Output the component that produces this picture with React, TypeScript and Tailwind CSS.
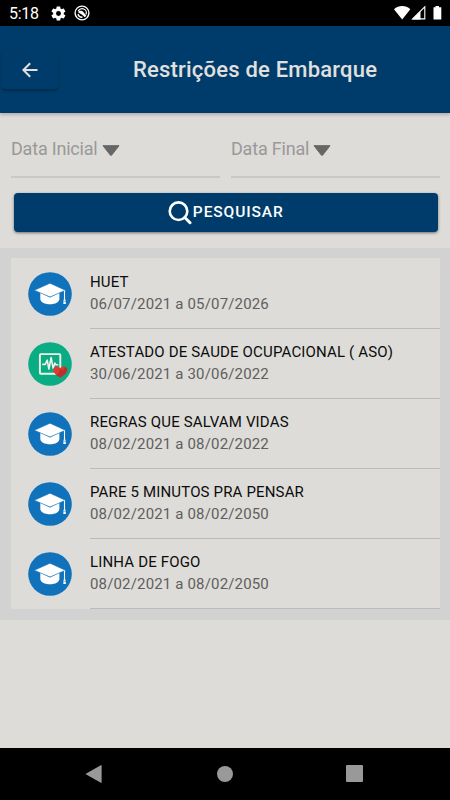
import React from "react";

interface Restriction {
    title: string;
    start: string;
    end: string;
    type: "course" | "health";
}

const restrictions: Restriction[] = [
    { title: "HUET", start: "06/07/2021", end: "05/07/2026", type: "course" },
    { title: "ATESTADO DE SAUDE OCUPACIONAL ( ASO)", start: "30/06/2021", end: "30/06/2022", type: "health" },
    { title: "REGRAS QUE SALVAM VIDAS", start: "08/02/2021", end: "08/02/2022", type: "course" },
    { title: "PARE 5 MINUTOS PRA PENSAR", start: "08/02/2021", end: "08/02/2050", type: "course" },
    { title: "LINHA DE FOGO", start: "08/02/2021", end: "08/02/2050", type: "course" },
];

const CourseIcon: React.FC = () => (
    <svg viewBox="0 0 44 44" className="size-11 shrink-0">
        <circle cx="22" cy="22" r="21.8" fill="#1072bb" />
        <path d="M12.3 20.5v6.2c0 3.3 4.3 5.5 9.7 5.5s9.4-2.2 9.4-5.5v-6.2L22 25.6z" fill="#fff" />
        <path d="M6.3 18.3 22 11.2l15.4 7.1L22 25z" fill="#fff" stroke="#1072bb" strokeWidth="0.6" />
        <path d="M36.5 18.3v9.5" stroke="#fff" strokeWidth="1.1" />
        <path d="M35.6 27.5h1.9l.4 4.6h-2.6z" fill="#fff" />
        <path d="M35.5 29.3h2.2" stroke="#1072bb" strokeWidth="0.5" />
    </svg>
);

const HealthIcon: React.FC = () => (
    <svg viewBox="0 0 44 44" className="size-11 shrink-0" fill="none">
        <circle cx="22" cy="22" r="21.8" fill="#0aac83" />
        <rect x="11.9" y="12.1" width="20.4" height="19.6" rx="0.8" stroke="#eef2e9" strokeWidth="1.9" />
        <path d="M14.2 22.4h3l2-4.2 1.7 8.8 2.2-11.5 2 10.7 1.8-5.2.9 1.7h2.5" stroke="#eef2e9" strokeWidth="1.6" strokeLinejoin="round" />
        <path d="M32.2 35.4c-3.7-2.2-7-4.6-7-7.5 0-4.1 5.2-4.6 7-1.6 1.8-3 7-2.5 7 1.6 0 2.900-3.300 5.300-7 7.500z" fill="#dd3b32" />
        <path d="M39.2 27.9c0 2.9-3.3 5.3-7 7.5l-3.8-2.4c2.4-1.4 3.7-3.5 3.8-6.7l2.2 2.5 2.7-4c1.3.5 2.1 1.5 2.1 3.1z" fill="#bd302b" />
    </svg>
);

const StatusBar: React.FC = () => (
    <div className="flex h-[26px] items-center justify-between bg-black pl-[9px] pr-[7px] text-white">
        <div className="flex items-center">
            <span className="w-[41px] pt-[2px] text-[16px] leading-6 tracking-[-0.3px]">5:18</span>
            <svg viewBox="0 0 24 24" className="size-[17px]" fill="currentColor">
                <path d="M19.4 13a7.8 7.8 0 0 0 0-2l2.1-1.6c.2-.2.3-.4.1-.7l-2-3.4c-.1-.2-.4-.3-.6-.2l-2.5 1a7 7 0 0 0-1.7-1l-.4-2.6c0-.3-.2-.5-.5-.5h-4c-.3 0-.5.2-.5.5L9 5.1a7 7 0 0 0-1.7 1l-2.5-1c-.2-.1-.5 0-.6.2l-2 3.4c-.1.2-.1.5.1.7L4.5 11a8 8 0 0 0 0 2l-2.2 1.6c-.2.2-.2.5-.1.7l2 3.4c.1.2.4.3.6.2l2.5-1a7 7 0 0 0 1.7 1l.4 2.6c0 .3.2.5.5.5h4c.3 0 .5-.2.5-.5l.4-2.6a7 7 0 0 0 1.7-1l2.5 1c.2.1.5 0 .6-.2l2-3.4c.1-.2.1-.5-.1-.7zM12 15.5a3.5 3.5 0 1 1 0-7 3.5 3.5 0 0 1 0 7z" />
            </svg>
            <svg viewBox="0 0 16 16" className="ml-[7px] size-4" fill="none" stroke="currentColor">
                <circle cx="8" cy="8" r="6.9" strokeWidth="1.4" />
                <path d="M8.5 12.2A4.2 4.2 0 0 1 4 9M4.200 6.300A4.200 4.200 0 0 1 12 9.500" strokeWidth="1.3" />
                <path d="M4 7.200C5.500 5 8.600 5.500 9.500 7.200l2.800 3.600-1.500 1.400-3-2.700z" fill="currentColor" stroke="none" />
            </svg>
        </div>
        <svg viewBox="0 0 49 16" className="h-4 w-[49px]" fill="currentColor">
            <path d="M0 4.3C4.6 0 11.8 0 16.3 4.3L8.2 14.5z" />
            <path d="M18.6 13.9 30.8 1.9v12z" fill="none" stroke="currentColor" strokeWidth="1.1" />
            <path d="M18 14.5 26.5 6v8.5z" />
            <path d="M39.5 2.2h2V1h3.5v1.2h2.3v12.3h-7.8z" />
        </svg>
    </div>
);

const Header: React.FC = () => (
    <header className="relative z-10 flex h-[87px] items-center bg-[#003c6b] text-[#e2e0de] shadow-[0_2px_3px_rgba(0,0,0,0.2)]">
        <button className="ml-[2px] flex h-[39px] w-14 items-center justify-center rounded shadow-[0_2px_3px_rgba(0,0,0,0.3)]">
            <svg viewBox="0 0 16 16" className="mr-px size-4" fill="none" stroke="currentColor" strokeWidth="2">
                <path d="M15.5 8H1.5M8.2 1.2 1.4 8l6.8 6.8" />
            </svg>
        </button>
        <h1 className="ml-[75px] whitespace-nowrap text-[22px] font-medium leading-7 tracking-[0.2px]">Restrições de Embarque</h1>
    </header>
);

const DateField: React.FC<{ label: string }> = ({ label }) => (
    <div className="flex h-[65px] flex-1 items-center gap-1 border-b-2 border-[#c9c8c7] pt-2 text-[18px] text-[#999998]">
        <span className="whitespace-nowrap tracking-[-0.2px]">{label}</span>
        <svg viewBox="0 0 18 11" className="mt-[3px] h-[11px] w-[18px]">
            <path d="M1 .7h16L9.7 10.1Q9 10.8 8.3 10.1z" fill="#666665" stroke="#666665" strokeWidth="1" strokeLinejoin="round" />
        </svg>
    </div>
);

const Filters: React.FC = () => (
    <section className="h-[135px]">
        <div className="flex gap-[11px] pl-[11px] pr-[10px]">
            <DateField label="Data Inicial" />
            <DateField label="Data Final" />
        </div>
        <button className="ml-[13.5px] mt-[15px] flex h-[39px] w-[424.5px] items-center justify-center rounded bg-[#003c6b] text-[15.5px] font-medium tracking-[0.9px] text-white shadow-[0_1px_3px_rgba(0,0,0,0.5)]">
            <svg viewBox="0 0 24 24" className="mr-px size-6" fill="none" stroke="currentColor">
                <circle cx="10.5" cy="10.2" r="8.8" strokeWidth="2.6" />
                <path d="m16.8 16.500 5.200 5.200" strokeWidth="3" strokeLinecap="round" />
            </svg>
            PESQUISAR
        </button>
    </section>
);

const RestrictionRow: React.FC<{ item: Restriction }> = ({ item }) => (
    <li className="flex h-[70px] items-center pl-[17px]">
        {item.type === "health" ? <HealthIcon /> : <CourseIcon />}
        <div className="ml-[18px] h-full flex-1 border-b border-[#bcbbba] pt-[13px]">
            <p className="whitespace-nowrap text-[15px] leading-[21px] tracking-[0.16px] text-[#0c0c0c]">{item.title}</p>
            <p className="text-[15px] leading-[22px] tracking-[0.16px] text-[#5f5f5e]">
                {item.start} a {item.end}
            </p>
        </div>
    </li>
);

const NavigationBar: React.FC = () => (
    <nav className="flex h-[52px] items-center justify-between bg-black pb-px pl-[85px] pr-[87px]">
        <svg viewBox="0 0 18 18" className="size-[18px]" fill="#999">
            <path d="M1.3 8.4 15.8.2q.8-.4.8.5v16.6q0 .9-.8.5L1.3 9.6Q.4 9 1.3 8.4z" />
        </svg>
        <span className="size-4 rounded-full bg-[#999]" />
        <span className="size-[17px] rounded-[1px] bg-[#999]" />
    </nav>
);

export default function App() {
    return (
        <div className="flex h-[800px] w-[450px] flex-col overflow-hidden bg-[#dddcd8] font-['Roboto',sans-serif]">
            <StatusBar />
            <Header />
            <main className="flex-1">
                <Filters />
                <section className="h-[372px] bg-[#d2d2d2] pl-[11px] pr-[10px] pt-[10px]">
                    <ul className="bg-[#dddcd8] pt-px">
                        {restrictions.map((item) => (
                            <RestrictionRow key={item.title} item={item} />
                        ))}
                    </ul>
                </section>
            </main>
            <NavigationBar />
        </div>
    );
}
